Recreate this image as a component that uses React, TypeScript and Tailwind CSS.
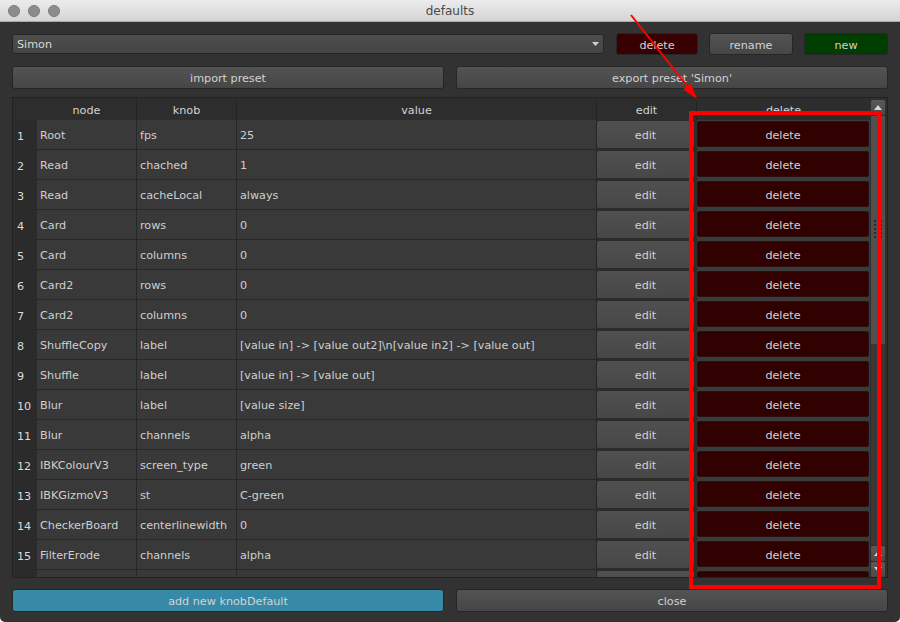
import React from 'react';

interface KnobDefault {
    node: string;
    knob: string;
    value: string;
}

const rows: KnobDefault[] = [
    { node: 'Root', knob: 'fps', value: '25' },
    { node: 'Read', knob: 'chached', value: '1' },
    { node: 'Read', knob: 'cacheLocal', value: 'always' },
    { node: 'Card', knob: 'rows', value: '0' },
    { node: 'Card', knob: 'columns', value: '0' },
    { node: 'Card2', knob: 'rows', value: '0' },
    { node: 'Card2', knob: 'columns', value: '0' },
    { node: 'ShuffleCopy', knob: 'label', value: '[value in] -> [value out2]\\n[value in2] -> [value out]' },
    { node: 'Shuffle', knob: 'label', value: '[value in] -> [value out]' },
    { node: 'Blur', knob: 'label', value: '[value size]' },
    { node: 'Blur', knob: 'channels', value: 'alpha' },
    { node: 'IBKColourV3', knob: 'screen_type', value: 'green' },
    { node: 'IBKGizmoV3', knob: 'st', value: 'C-green' },
    { node: 'CheckerBoard', knob: 'centerlinewidth', value: '0' },
    { node: 'FilterErode', knob: 'channels', value: 'alpha' },
];

const btn = 'flex items-center justify-center pt-[4px] rounded-[3px] border border-[#262626] text-[#d2d2d2]';
const grayBtn = `${btn} bg-gradient-to-b from-[#535353] to-[#464646]`;
const cell = 'bg-[#393939] border-r border-b border-[#272727] flex items-center pl-[3px] pt-[4px] whitespace-nowrap';

const ScrollArrow: React.FC<{ down?: boolean }> = ({ down }) => (
    <div className="w-[14px] h-[15px] rounded-[2px] bg-gradient-to-b from-[#5a5a5a] to-[#4a4a4a] flex items-center justify-center">
        <svg width="8" height="5" viewBox="0 0 8 5">
            <path d={down ? 'M0 0 L8 0 L4 5 Z' : 'M0 5 L8 5 L4 0 Z'} fill="#d8d8d8" />
        </svg>
    </div>
);

const Row: React.FC<{ n?: number; r?: KnobDefault }> = ({ n, r }) => (
    <div className="flex h-[30px] text-[#cfcfcf]">
        <div className="w-[24px] bg-[#2b2b2b] flex items-center pl-[4px] pt-[4px] text-[#dadada]">{n}</div>
        <div className={`w-[100px] ${cell}`}>{r?.node}</div>
        <div className={`w-[100px] ${cell}`}>{r?.knob}</div>
        <div className={`w-[360px] ${cell}`}>{r?.value}</div>
        <div className="w-[100px] bg-[#2c2c2c] pt-[1px] pb-[2px] pr-[3px]">
            <div className="h-full rounded-[2px] bg-gradient-to-b from-[#505050] to-[#474747] flex items-center justify-center pt-[3px] text-[#d2d2d2]">
                {r && 'edit'}
            </div>
        </div>
        <div className="w-[173px] bg-[#3b3b3b] pt-[1px] pb-[3px] pr-[1px]">
            <div className="h-full rounded-[2px] bg-[#310000] border border-[#2a1010] flex items-center justify-center pt-[4px] text-[#d2d2d2]">
                {r && 'delete'}
            </div>
        </div>
    </div>
);

const App: React.FC = () => {
    return (
        <div className="relative w-[900px] h-[622px] bg-white overflow-hidden text-[11.2px] font-['DejaVu_Sans',sans-serif]">
            <div className="flex flex-col w-full h-full rounded-b-[5px] bg-[#323232] overflow-hidden">
                {/* title bar */}
                <div className="relative h-[22px] shrink-0 bg-gradient-to-b from-[#ececec] to-[#d4d4d4] border-b border-[#a9a9a9] flex items-center justify-center">
                    <div className="absolute left-[8px] top-[5px] flex gap-[8px]">
                        <span className="w-[12px] h-[12px] rounded-full bg-[#8c8c8c] border border-[#7a7a7a]" />
                        <span className="w-[12px] h-[12px] rounded-full bg-[#8c8c8c] border border-[#7a7a7a]" />
                        <span className="w-[12px] h-[12px] rounded-full bg-[#8c8c8c] border border-[#7a7a7a]" />
                    </div>
                    <span className="text-[12px] text-[#4a4a4a] pt-[1px]">defaults</span>
                </div>

                <div className="flex flex-col flex-1 px-[12px] pt-[11px]">
                    {/* preset row */}
                    <div className="flex items-center h-[22px]">
                        <div className="relative flex items-center w-[592px] h-[20px] rounded-[3px] border border-[#262626] bg-gradient-to-b from-[#4e4e4e] to-[#444444] pl-[4px] pt-[3px] text-[#d8d8d8]">
                            Simon
                            <svg className="absolute right-[4px] top-[7px]" width="7" height="4" viewBox="0 0 7 4">
                                <path d="M0 0 L7 0 L3.5 4 Z" fill="#cfcfcf" />
                            </svg>
                        </div>
                        <div className={`${btn} ml-[12px] w-[82px] h-[22px] bg-[#380000]`}>delete</div>
                        <div className={`${grayBtn} ml-[11px] w-[84px] h-[22px]`}>rename</div>
                        <div className={`${btn} ml-[11px] w-[84px] h-[22px] bg-[#003d00]`}>new</div>
                    </div>

                    <div className="grid grid-cols-2 gap-[12px] mt-[11px] h-[21px]">
                        <div className={grayBtn}>import preset</div>
                        <div className={grayBtn}>export preset 'Simon'</div>
                    </div>

                    {/* table */}
                    <div className="flex mt-[10px] h-[481px] border border-[#222]">
                        <div className="flex flex-col w-[857px]">
                            <div className="flex h-[22px] shrink-0 bg-[#2d2d2d] text-[#d4d4d4]">
                                <div className="w-[24px]" />
                                <div className="w-[100px] border-r border-[#232323] flex items-center justify-center pt-[4px]">node</div>
                                <div className="w-[100px] border-r border-[#232323] flex items-center justify-center pt-[4px]">knob</div>
                                <div className="w-[360px] border-r border-[#232323] flex items-center justify-center pt-[4px]">value</div>
                                <div className="w-[100px] border-r border-[#232323] flex items-center justify-center pt-[4px]">edit</div>
                                <div className="w-[173px] flex items-center justify-center pt-[4px]">delete</div>
                            </div>
                            <div className="flex-1 overflow-hidden">
                                {rows.map((r, i) => (
                                    <Row key={i} n={i + 1} r={r} />
                                ))}
                                <Row />
                            </div>
                        </div>
                        {/* scrollbar */}
                        <div className="flex flex-col w-[17px] bg-[#2f2f2f] pl-[1px] pr-[2px] pt-[2px] pb-0">
                            <ScrollArrow />
                            <div className="flex-1 flex flex-col mt-[1px] mb-[1px] bg-[#383838]">
                                <div className="h-[228px] bg-[#505050] flex flex-col items-center pt-[104px]">
                                    <div className="grid grid-cols-2 gap-x-[4px] gap-y-[2px]">
                                        {Array.from({ length: 10 }).map((_, k) => (
                                            <span key={k} className="w-[2px] h-[2px] bg-[#2a2a2a]" />
                                        ))}
                                    </div>
                                </div>
                            </div>
                            <ScrollArrow />
                            <div className="h-[1px]" />
                            <ScrollArrow down />
                        </div>
                    </div>

                    {/* bottom buttons */}
                    <div className="grid grid-cols-2 gap-[12px] mt-[11px] h-[21px]">
                        <div className={`${btn} bg-[#3789a8] text-[#262626]`}>add new knobDefault</div>
                        <div className={grayBtn}>close</div>
                    </div>
                </div>
            </div>

            {/* red annotation */}
            <div className="absolute left-[689px] top-[111px] w-[192px] h-[478px] border-4 border-[#ff0000]" />
            <svg className="absolute left-0 top-0" width="900" height="622" viewBox="0 0 900 622">
                <line x1="631" y1="15" x2="688" y2="87" stroke="#ff0000" strokeWidth="2" />
                <path d="M697 99 L683.2 89.5 L691 83.3 Z" fill="#ff0000" />
            </svg>
        </div>
    );
};

export default App;
